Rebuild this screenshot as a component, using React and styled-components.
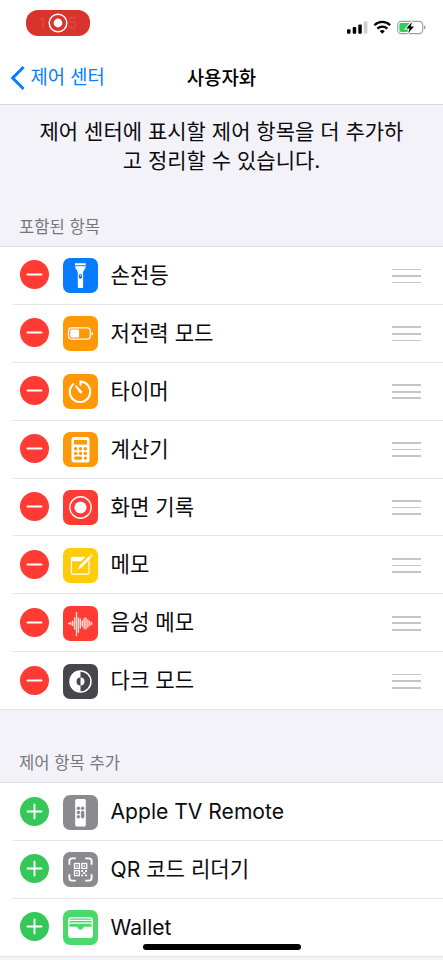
import React from 'react';
import styled, { createGlobalStyle } from 'styled-components';

const GlobalStyle = createGlobalStyle`
  * {
    box-sizing: border-box;
  }

  body {
    margin: 0;
    background: #fff;
    overflow: hidden;
    font-family: Inter, "Noto Sans CJK KR", sans-serif;
  }

  svg {
    display: block;
  }
`;

const Screen = styled.div`
  position: relative;
  width: 443px;
  height: 960px;
  overflow: hidden;
  background: #f3f2f8;
  color: #0b0b0d;
`;

const Header = styled.header`
  height: 105px;
  background: #fff;
  border-bottom: 1px solid #d8d7dc;
`;

const StatusBar = styled.div`
  display: flex;
  justify-content: space-between;
  height: 52px;
  padding: 10px 17px 0 26px;
`;

const RecordingPill = styled.div`
  display: grid;
  place-items: center;
  width: 64px;
  height: 26px;
  border-radius: 12px;
  background: #d9332e;

  > * {
    grid-area: 1 / 1;
  }
`;

const Clock = styled.span`
  display: flex;
  justify-content: space-between;
  width: 39px;
  font-size: 16px;
  line-height: 26px;
  font-weight: 500;
  color: #df4640;
`;

const StatusIcons = styled.div`
  display: flex;
  align-items: flex-start;
  padding-top: 10px;
`;

const NavBar = styled.nav`
  display: grid;
  grid-template-columns: 1fr auto 1fr;
  align-items: center;
  height: 52px;
  padding: 0 10px;
`;

const BackLink = styled.a`
  display: flex;
  align-items: center;
  gap: 4.5px;
  font-size: 18.8px;
  line-height: 28px;
  color: #087cff;
`;

const Title = styled.h1`
  margin: 0;
  padding-top: 1px;
  font-size: 18.9px;
  line-height: 28px;
  font-weight: 500;
  color: #000;
`;

const Description = styled.p`
  height: 97px;
  margin: 0;
  padding-top: 13px;
  font-size: 21px;
  line-height: 28.5px;
  text-align: center;
`;

const SectionTitle = styled.h2`
  margin: 0;
  height: ${(props) => props.$height}px;
  padding: ${(props) => props.$height - 31}px 0 0 19px;
  font-size: 16.6px;
  line-height: 24px;
  font-weight: 400;
  color: #77767b;
`;

const List = styled.ul`
  margin: 0;
  padding: 0;
  list-style: none;
  background: #fff;
  border-top: 1px solid #e2e1e6;
  border-bottom: 1px solid #e2e1e6;
`;

const Row = styled.li`
  display: flex;
  align-items: center;
  height: 57.9px;
  margin-left: 13px;
  padding: 1px 22px 0 7px;
  border-top: 1px solid #e5e5e8;

  &:first-child {
    height: 56.9px;
    border-top: 0;
  }
`;

const RoundButton = styled.button`
  flex: none;
  width: 29px;
  height: 29px;
  margin: 0 14px 2px 0;
  padding: 0;
  border: 0;
  border-radius: 50%;
  background: ${(props) => props.$color};
`;

const IconTile = styled.div`
  flex: none;
  width: 35px;
  height: 35px;
  border-radius: 7px;
  overflow: hidden;
  background: ${(props) => props.$color};
`;

const Label = styled.span`
  flex: 1;
  padding-left: 12.5px;
  font-size: 21.1px;
  line-height: 30px;
  white-space: nowrap;
`;

const Handle = styled.div`
  display: flex;
  flex-direction: column;
  gap: 4.9px;
  width: 29px;

  span {
    height: 1.7px;
    background: #c5c4c8;
  }
`;

const HomeIndicator = styled.div`
  position: absolute;
  left: 143px;
  bottom: 10px;
  width: 158px;
  height: 6px;
  border-radius: 3px;
  background: #000;
`;

const icons = {
  flashlight: (
    <g fill="#fff">
      <path d="M12 5.2h10.8v2H12z" />
      <path d="M12 8.3h10.8c0 2.6-2.7 3.8-2.7 6.3V29q0 1-1 1h-3.3q-1 0-1-1V14.600c0-2.500-2.800-3.700-2.800-6.300z" />
      <rect x="15.900" y="15.700" width="3" height="5" rx="1.500" fill="#087cff" />
      <circle cx="17.400" cy="17.400" r=".7" />
    </g>
  ),
  battery: (
    <g>
      <rect x="5.500" y="11.800" width="21.800" height="11.400" rx="3" fill="none" stroke="#fff" strokeWidth="1.200" />
      <rect x="7.300" y="13.500" width="8.800" height="8" rx="1.300" fill="#fff" />
      <path d="M28.600 15.400q1.500.5 1.500 2.100t-1.500 2.100z" fill="#fff" />
    </g>
  ),
  timer: (
    <g fill="none" stroke="#fff" strokeWidth="2.100" strokeLinecap="round">
      <path d="M17.500 11V7.600A10.200 10.200 0 1 1 10.200 10.200" />
      <path d="M11.800 12l1.500-.8 5.600 6q.8 1.100-.2 1.900t-1.900-.2z" fill="#fff" stroke="none" />
    </g>
  ),
  calculator: (
    <g>
      <rect x="8.500" y="5" width="18" height="25.500" rx="2.500" fill="#fff" />
      <rect x="11" y="8" width="13" height="4.600" rx=".6" fill="#ff9807" />
      <g fill="#ff9807">
        {[12.7, 17.5, 22.3].map((x) => (
          <React.Fragment key={x}>
            <circle cx={x} cy="16.700" r="1.700" />
            <circle cx={x} cy="21.400" r="1.700" />
          </React.Fragment>
        ))}
        <rect x="11" y="24.500" width="8.200" height="3.200" rx="1.600" />
        <circle cx="22.300" cy="26.100" r="1.700" />
      </g>
    </g>
  ),
  record: (
    <g>
      <circle cx="17.500" cy="17.500" r="10.700" fill="none" stroke="#fff" strokeWidth="1.400" />
      <circle cx="17.500" cy="17.500" r="6" fill="#fff" />
    </g>
  ),
  memo: (
    <g>
      <path d="M22 9.300H10.200q-1.800 0-1.800 1.800v13.300q0 1.800 1.800 1.800h14q1.800 0 1.800-1.800V13" fill="none" stroke="#fff" strokeWidth="1.200" />
      <path d="M8.400 9h13.800l-4.200 4.300H8.400z" fill="#fff" />
      <path d="M26.100 8.100l2 2-9.700 9.600-3.500 1.700 1.500-3.600z" fill="#fff" />
      <path d="M26.900 7.300l.7-.7q.8-.5 1.500.2t.2 1.500l-.6.800z" fill="#fff" />
    </g>
  ),
  voice: (
    <path
      d="M5.500 17.500h1M7.800 16.300v2.400M9.700 15.500v4M11.600 12v11M13.500 6.500v23M15.400 12v14M17.300 13v9M19.200 15v5M21.100 12.500v10M23 12v11M24.900 14v7M26.800 15.500v4M28.700 16.800v1.400"
      fill="none"
      stroke="#ffd9d6"
      strokeWidth="1.400"
      strokeLinecap="round"
    />
  ),
  dark: (
    <g>
      <circle cx="17.500" cy="17.500" r="10.500" fill="none" stroke="#fff" strokeWidth="1.500" />
      <path d="M17.500 7a10.500 10.500 0 0 0 0 21v-6.500a4 4 0 0 1 0-8z" fill="#fff" />
      <path d="M17.500 13.500a4 4 0 0 1 0 8z" fill="#fff" />
    </g>
  ),
  remote: (
    <g>
      <rect x="12.200" y="4" width="10.600" height="27.500" rx="1.500" fill="#fff" />
      <g fill="#8b8a8f">
        <circle cx="15.400" cy="13.200" r="1.700" />
        <circle cx="19.600" cy="13.200" r="1.700" />
        <circle cx="15.400" cy="17.500" r="1.700" />
        <circle cx="15.400" cy="21.800" r="1.700" />
        <rect x="17.900" y="15.800" width="3.400" height="7.700" rx="1.700" />
      </g>
    </g>
  ),
  qr: (
    <g fill="none" stroke="#fff">
      <path
        d="M6.400 12.800V9q0-2.600 2.600-2.600h3.800M22.200 6.400H26q2.600 0 2.600 2.600v3.800M28.600 22.200V26q0 2.600-2.600 2.600h-3.800M12.800 28.600H9q-2.600 0-2.600-2.600v-3.800"
        strokeWidth="1.900"
      />
      <g strokeWidth="1.300">
        <rect x="11.500" y="11.500" width="4.900" height="4.900" />
        <rect x="18.800" y="11.500" width="4.900" height="4.900" />
        <rect x="11.500" y="18.700" width="4.900" height="4.900" />
      </g>
      <path d="M13.200 14h1.500M20.500 14H22M13.200 21.200h1.500" strokeWidth="1.500" />
      <path d="M18.300 19h1.800M22.200 19H24M20.100 21.200h2.100M18.300 23.400h1.800M22.200 23.400H24" strokeWidth="1.800" />
    </g>
  ),
  wallet: (
    <g>
      <rect x="5.700" y="7.900" width="23.600" height="19.600" rx="2.700" fill="none" stroke="#fff" strokeWidth="1.200" />
      <path d="M6 11.400q.6-1 2-1h19q1.400 0 2 1M6 14.200q.6-1 2-1h19q1.400 0 2 1" fill="none" stroke="#fff" strokeWidth="1.200" />
      <path d="M5.300 16.700h7.900q.9 0 1.500 1 1 2 2.800 2t2.800-2q.6-1 1.500-1h7.900v8.100q0 3-3 3H8.300q-3 0-3-3z" fill="#fff" />
    </g>
  ),
};

const includedItems = [
  { label: '손전등', icon: 'flashlight', color: '#087cff' },
  { label: '저전력 모드', icon: 'battery', color: '#ff9807' },
  { label: '타이머', icon: 'timer', color: '#ff9807' },
  { label: '계산기', icon: 'calculator', color: '#ff9807' },
  { label: '화면 기록', icon: 'record', color: '#ff3b34' },
  { label: '메모', icon: 'memo', color: '#ffcc07' },
  { label: '음성 메모', icon: 'voice', color: '#ff3b34' },
  { label: '다크 모드', icon: 'dark', color: '#48464b' },
];

const moreItems = [
  { label: 'Apple TV Remote', icon: 'remote', color: '#8b8a8f' },
  { label: 'QR 코드 리더기', icon: 'qr', color: '#8b8a8f' },
  { label: 'Wallet', icon: 'wallet', color: '#4cd96b' },
];

const ControlRow = ({ item, included }) => (
  <Row>
    <RoundButton
      $color={included ? '#ff3b34' : '#35c759'}
      aria-label={included ? 'remove' : 'add'}
    >
      <svg width="29" height="29" viewBox="0 0 29 29">
        <path
          d={included ? 'M7.500 14.500h14' : 'M7.500 14.500h14M14.500 7.500v14'}
          stroke="#fff"
          strokeWidth="1.900"
          strokeLinecap="round"
        />
      </svg>
    </RoundButton>
    <IconTile $color={item.color}>
      <svg width="35" height="35" viewBox="0 0 35 35">{icons[item.icon]}</svg>
    </IconTile>
    <Label>{item.label}</Label>
    {included && (
      <Handle>
        <span />
        <span />
        <span />
      </Handle>
    )}
  </Row>
);

const App = () => (
  <>
    <GlobalStyle />
    <Screen>
      <Header>
        <StatusBar>
          <RecordingPill>
            <Clock>
              <span>1</span>
              <span>5</span>
            </Clock>
            <svg width="20" height="20" viewBox="0 0 20 20">
              <circle cx="10" cy="10" r="8.800" fill="#d9332e" stroke="#fff" strokeWidth="1.500" />
              <circle cx="10" cy="10" r="4.400" fill="#fff" />
            </svg>
          </RecordingPill>
          <StatusIcons>
            <svg width="79" height="16" viewBox="0 0 79 16">
              <rect x="0" y="9.300" width="3.500" height="4.500" rx="1" />
              <rect x="5.700" y="6.900" width="3.500" height="6.900" rx="1" />
              <rect x="11.300" y="4.400" width="3.500" height="9.400" rx="1" />
              <rect x="16.900" y="1.300" width="3.500" height="12.500" rx="1" fill="#cfcfd1" />
              <g fill="none" stroke="#000" strokeWidth="2.300">
                <path d="M27.400 5.200a11.200 11.200 0 0 1 15.800 0" />
                <path d="M30.300 8.600a7.200 7.200 0 0 1 10 0" />
              </g>
              <path d="M35.300 13.700l-2.600-2.600a3.900 3.900 0 0 1 5.200 0z" />
              <rect x="50.700" y="1.400" width="25" height="12.200" rx="3.600" fill="none" stroke="#9d9da0" strokeWidth="1.100" />
              <path d="M54.300 3h9.200l-1.500 9h-7.700q-2 0-2-2V5q0-2 2-2z" fill="#30cf59" />
              <path d="M77 5.500q1.600.6 1.600 2T77 9.500z" fill="#9d9da0" />
              <path d="M65 1.600L59 8.500h3.300L61 13.500l6.300-7.200h-3.500z" stroke="#fff" strokeWidth="1.800" />
              <path d="M65 1.900L59.200 8.400h3.400L61 13.200l6.100-6.800h-3.500z" />
            </svg>
          </StatusIcons>
        </StatusBar>
        <NavBar>
          <BackLink>
            <svg width="16" height="26" viewBox="0 0 16 26">
              <path d="M13.600 2L2.700 13l10.900 11" fill="none" stroke="#087cff" strokeWidth="3" />
            </svg>
            제어 센터
          </BackLink>
          <Title>사용자화</Title>
        </NavBar>
      </Header>
      <Description>
        제어 센터에 표시할 제어 항목을 더 추가하
        <br />고 정리할 수 있습니다.
      </Description>
      <SectionTitle $height={44}>포함된 항목</SectionTitle>
      <List>
        {includedItems.map((item) => (
          <ControlRow key={item.label} item={item} included />
        ))}
      </List>
      <SectionTitle $height={72}>제어 항목 추가</SectionTitle>
      <List>
        {moreItems.map((item) => (
          <ControlRow key={item.label} item={item} />
        ))}
      </List>
      <HomeIndicator />
    </Screen>
  </>
);

export default App;
